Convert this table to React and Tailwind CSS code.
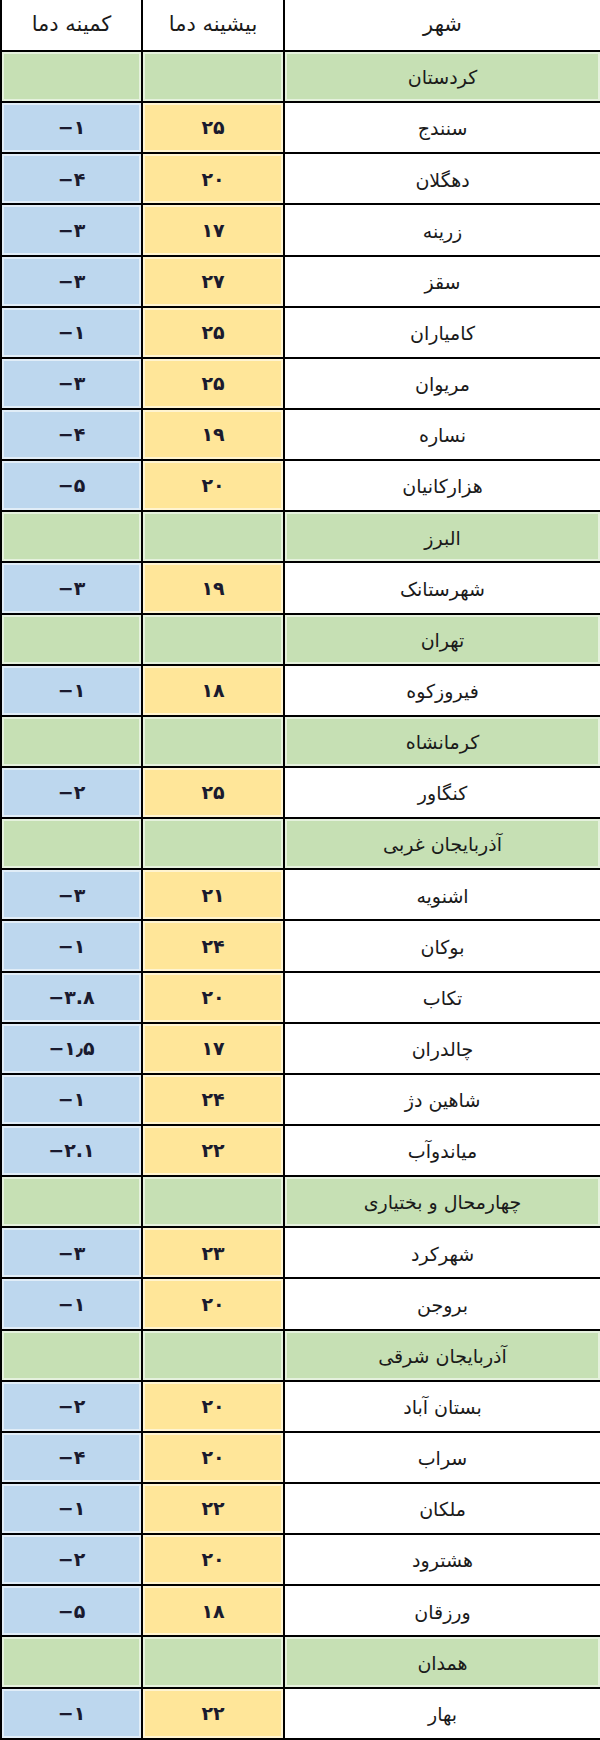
import React from "react";

// rows: [city, max, min] — a row with only a name is a province header
const rows = [
  ["کردستان"],
  ["سنندج", "۲۵", "−۱"],
  ["دهگلان", "۲۰", "−۴"],
  ["زرینه", "۱۷", "−۳"],
  ["سقز", "۲۷", "−۳"],
  ["کامیاران", "۲۵", "−۱"],
  ["مریوان", "۲۵", "−۳"],
  ["نساره", "۱۹", "−۴"],
  ["هزارکانیان", "۲۰", "−۵"],
  ["البرز"],
  ["شهرستانک", "۱۹", "−۳"],
  ["تهران"],
  ["فیروزکوه", "۱۸", "−۱"],
  ["کرمانشاه"],
  ["کنگاور", "۲۵", "−۲"],
  ["آذربایجان غربی"],
  ["اشنویه", "۲۱", "−۳"],
  ["بوکان", "۲۴", "−۱"],
  ["تکاب", "۲۰", "−۳.۸"],
  ["چالدران", "۱۷", "−۱٫۵"],
  ["شاهین دژ", "۲۴", "−۱"],
  ["میاندوآب", "۲۲", "−۲.۱"],
  ["چهارمحال و بختیاری"],
  ["شهرکرد", "۲۳", "−۳"],
  ["بروجن", "۲۰", "−۱"],
  ["آذربایجان شرقی"],
  ["بستان آباد", "۲۰", "−۲"],
  ["سراب", "۲۰", "−۴"],
  ["ملکان", "۲۲", "−۱"],
  ["هشترود", "۲۰", "−۲"],
  ["ورزقان", "۱۸", "−۵"],
  ["همدان"],
  ["بهار", "۲۲", "−۱"],
];

const font = { fontFamily: '"DejaVu Sans", sans-serif' };

function Row({ city, max, min }) {
  const group = max === undefined;
  const fill = "shadow-[inset_0_0_0_2px_rgba(255,255,255,0.55)]";
  return (
    <div className="flex h-[51.15px] border-b-2 border-black">
      <div
        dir="ltr"
        className={`w-[141px] flex items-center justify-center border-r-2 border-black text-[19px] font-bold text-[#1a1a2e] ${fill} ${
          group ? "bg-[#c6e0b4]" : "bg-[#bdd7ee]"
        }`}
      >
        {min}
      </div>
      <div
        className={`w-[142px] flex items-center justify-center border-r-2 border-black text-[19px] font-bold text-[#1a1a2e] ${fill} ${
          group ? "bg-[#c6e0b4]" : "bg-[#ffe699]"
        }`}
      >
        {max}
      </div>
      <div
        dir="rtl"
        className={`flex-1 flex items-center justify-center pt-[2px] text-[19px] text-[#1a1a1a] ${
          group ? `bg-[#c6e0b4] ${fill}` : "bg-white"
        }`}
      >
        {city}
      </div>
    </div>
  );
}

export default function App() {
  return (
    <div className="w-[600px] h-[1740px] bg-white overflow-hidden" style={font}>
      <div className="border-l-2 border-black">
        <div className="flex h-[52px] border-b-2 border-black bg-white text-[21px] text-[#1a1a1a]">
          <div dir="rtl" className="w-[141px] flex items-center justify-center border-r-2 border-black">
            کمینه دما
          </div>
          <div dir="rtl" className="w-[142px] flex items-center justify-center border-r-2 border-black">
            بیشینه دما
          </div>
          <div dir="rtl" className="flex-1 flex items-center justify-center">
            شهر
          </div>
        </div>
        {rows.map(([city, max, min], i) => (
          <Row key={i} city={city} max={max} min={min} />
        ))}
      </div>
    </div>
  );
}
